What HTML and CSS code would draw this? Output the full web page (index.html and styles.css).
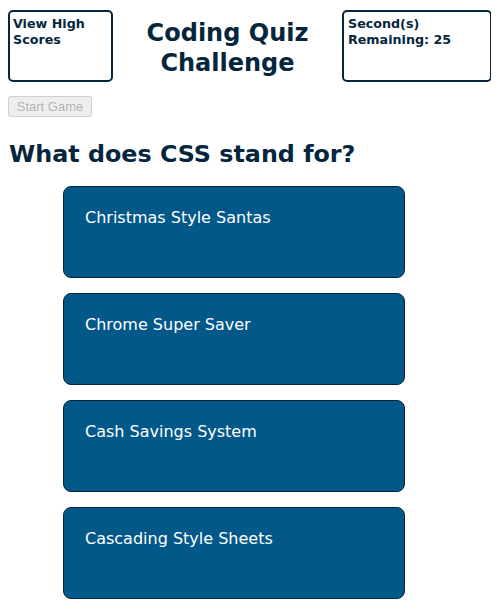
FILE: index.html
```html
<!DOCTYPE html>
<html>
<head>
<meta charset="utf-8">
<link rel="stylesheet" href="styles.css">
</head>
<body>
<header class="top">
  <div class="box box-left">View High Scores</div>
  <h1 class="title">Coding Quiz Challenge</h1>
  <div class="box box-right">Second(s) Remaining: 25</div>
</header>
<button class="start" disabled>Start Game</button>
<h2 class="question">What does CSS stand for?</h2>
<div class="answers">
  <button class="answer">Christmas Style Santas</button>
  <button class="answer">Chrome Super Saver</button>
  <button class="answer">Cash Savings System</button>
  <button class="answer">Cascading Style Sheets</button>
</div>
</body>
</html>
```
FILE: styles.css
```css
body {
  margin: 8px;
  font-family: "DejaVu Sans", Verdana, sans-serif;
  color: #05263d;
  background: #fff;
}
.top {
  display: flex;
  justify-content: space-between;
  align-items: flex-start;
  margin-top: 2px;
  margin-right: -1px;
}
.box {
  border: 2px solid #05263d;
  border-radius: 5px;
  padding: 4px 3px;
  font-size: 12.7px;
  font-weight: bold;
  line-height: 16px;
  box-sizing: border-box;
  height: 72px;
}
.box-left { width: 105px; }
.box-right { width: 150px; padding-left: 4px; }
.title {
  width: 180px;
  margin: 8px 0 0;
  text-align: center;
  font-size: 24px;
  line-height: 30px;
}
.start {
  display: block;
  margin-top: 14px;
  width: 84px;
  height: 21px;
  font-family: "Liberation Sans", Arial, sans-serif;
  font-size: 13px;
  padding: 1px 4px;
}
.question {
  margin: 22px 0 0 1px;
  font-size: 23.8px;
  line-height: 30px;
}
.answers {
  display: flex;
  flex-direction: column;
  gap: 15px;
  margin: 17px 0 0 55px;
}
.answer {
  width: 342px;
  height: 92px;
  box-sizing: border-box;
  background: #03588a;
  border: 1px solid #05263d;
  border-radius: 8px;
  color: #fff;
  font-family: "DejaVu Sans", Verdana, sans-serif;
  font-size: 16px;
  text-align: left;
  padding: 21px 21px;
  display: flex;
  align-items: flex-start;
}
```
